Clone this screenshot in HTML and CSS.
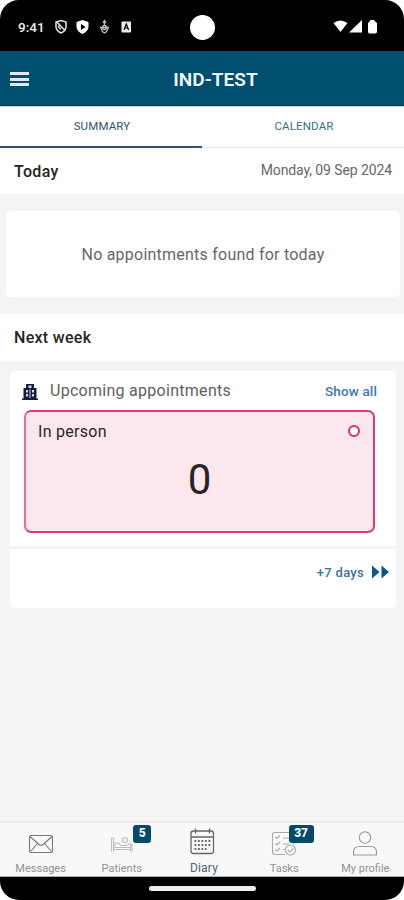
FILE: index.html
```
<!DOCTYPE html>
<html lang="en">
<head>
<meta charset="utf-8">
<title>IND-TEST</title>
<link rel="stylesheet" href="styles.css">
</head>
<body>
<div class="phone">
  <div class="status">
    <span class="clock">9:41</span>
    <svg class="status-left" width="78" height="16" viewBox="0 0 78 16">
      <g fill="none" stroke="#ddd" stroke-width="1.600"><path d="M7 1.500 12 3v5q-.5 4-5 6-4.500-2-5-6V3zM3 3l8.500 9M4.500 6.500q0 2.500 2.500 3.500"/></g>
      <path d="M28.500 1l6 2v5q-.5 4.500-6 7-5.500-2.500-6-7V3z" fill="#fff"/><path d="M27 5v6l4.500-3z" fill="#000"/>
      <g fill="none" stroke="#bbb" stroke-width="1.300"><path d="M50.500 1.500v5M49 4l1.500-2.500L52 4M46.500 8.500h8l-2 4-2 1.500-2-1.500z"/><circle cx="50.500" cy="8.500" r="2"/></g>
      <rect x="67.500" y="2.500" width="9.500" height="11" rx=".8" fill="#eee"/><path d="M70 11l2.300-6 2.300 6M70.800 9h3" fill="none" stroke="#000" stroke-width="1.200"/>
    </svg>
    <span class="camera"></span>
    <svg class="status-right" width="46" height="16" viewBox="0 0 46 16" fill="#fff">
      <path d="M.500 4Q7.500-1 14.500 4L7.500 13z"/><path d="M29 1v12.500H16z"/><path d="M37.500 1h3.500l1 1.500 2 1.500v8.500q0 2-1.500 2h-6Q35 14.500 35 12.500V4l1.500-1.500z"/>
    </svg>
  </div>
  <header class="header">
    <span class="menu"><i></i><i></i><i></i></span>
    <h1>IND-TEST</h1>
  </header>
  <nav class="tabs"><span class="tab active">SUMMARY</span><span class="tab">CALENDAR</span></nav>
  <section class="row today"><h2>Today</h2><span class="date">Monday, 09 Sep 2024</span></section>
  <div class="empty"><span>No appointments found for today</span></div>
  <section class="row next"><h2>Next week</h2></section>
  <section class="card">
    <div class="card-head">
      <svg class="building" width="16" height="18" viewBox="0 0 16 18"><path d="M4 5V1h8v4h2.500v10.500H16V17H0v-1.500h1.500V5z" fill="#171c3c"/><path d="M6.500 2.500h3V5h-3zM4 7h2v2.500H4zM10 7h2v2.500h-2zM4 11h2v2.500H4zM10 11h2v2.500h-2zM7.500 6.500h1v8.500h-1z" fill="#d5d9e5"/></svg>
      <span class="upcoming">Upcoming appointments</span><span class="show">Show all</span>
    </div>
    <div class="person"><div class="person-top"><span>In person</span><i class="ring"></i></div><div class="count">0</div></div>
    <div class="more"><span>+7 days</span><svg width="17" height="14" viewBox="0 0 17 14" fill="#095591"><path d="M0 .500 7.500 7 0 13.500zM9.500.500 17 7l-7.500 6.500z"/></svg></div>
  </section>
  <nav class="bottom">
    <div class="item"><svg width="30" height="28" viewBox="0 0 30 28" fill="none" stroke="#777" stroke-width="1.100"><rect x="3.500" y="6.500" width="23" height="17" rx="1.500"/><path d="M4 7.500l9 8q2 1.500 4 0l9-8M4.500 22.500l7-8M25.500 22.500l-7-8"/></svg><span>Messages</span></div>
    <div class="item"><svg width="30" height="28" viewBox="0 0 30 28" fill="none" stroke="#bdbdbd" stroke-width="1.100"><path d="M4.500 9v13.500M6.500 9v13.500M4.500 9h2M6.500 18.500h17M6.500 20.500h17M23.500 14.500v8M25 14.500v8M8 14h3l3 2.500h5l5-2M8 14v3"/><circle cx="18" cy="11" r="2.500"/></svg><b class="badge">5</b><span>Patients</span></div>
    <div class="item current"><svg width="30" height="28" viewBox="0 0 30 28" fill="none" stroke="#666" stroke-width="1.300"><rect x="3" y="3" width="22.500" height="22.500" rx="2.500"/><path d="M3 9h22.500M7.500.500v5M21.500.500v5"/><path d="M6.500 13h16M6.500 17h16M6.500 21h12" stroke-width="1.800" stroke-dasharray="1.800 1.700"/></svg><span>Diary</span></div>
    <div class="item"><svg width="30" height="28" viewBox="0 0 30 28" fill="none" stroke="#aaa" stroke-width="1.100"><path d="M16 25.500H6q-2.500 0-2.500-2.500V6Q3.500 3.500 6 3.500h16q2.500 0 2.500 2.500v9.500M6.500 8 8 9.500l3-3M14 9h7M6.500 14.500 8 16l3-3M14 15h6M6.500 20.500 8 22l3-3M14 20.500h2"/><circle cx="21.500" cy="21" r="5"/><path d="M19 21l2 2 3.500-4"/></svg><b class="badge wide">37</b><span>Tasks</span></div>
    <div class="item"><svg width="30" height="28" viewBox="0 0 30 28" fill="none" stroke="#999" stroke-width="1.100"><circle cx="15" cy="8.500" r="5.700"/><path d="M3.500 26v-3q0-5.500 6-5.500h11q6 0 6 5.500v3z"/></svg><span>My profile</span></div>
  </nav>
  <div class="gesture"><i></i></div>
</div>
</body>
</html>
```
FILE: styles.css
```
* { box-sizing: border-box; }
body { margin: 0; background: #fff; font-family: Roboto, sans-serif; }
h1, h2 { margin: 0; font-weight: 500; }
svg { display: block; flex: none; }
.phone { width: 404px; height: 900px; display: flex; flex-direction: column; background: #f4f4f4; border-radius: 19px; overflow: hidden; }
.status { height: 51px; flex: none; background: #000; color: #eee; display: flex; align-items: center; padding: 3px 25px 0 18px; }
.clock { font-size: 13.5px; width: 36px; font-weight: 500; }
.camera { width: 25px; height: 25px; border-radius: 50%; background: #fff; margin-left: 58px; }
.status-right { margin-left: auto; }
.header { height: 55px; flex: none; background: #004f70; color: #f4faff; display: grid; grid-template-columns: 30px 1fr; align-items: center; padding: 2px 0 0 10px; border-bottom: 1px solid #003a5e; }
.header h1 { font-size: 19px; font-weight: 600; letter-spacing: .1px; text-align: center; padding-right: 13px; white-space: nowrap; }
.menu { display: grid; gap: 2.5px; }
.menu i { width: 19px; height: 3px; background: #dfeaff; }
.tabs { height: 42px; flex: none; background: #fff; display: flex; border-top: 1px solid #c9d0d6; }
.tab { flex: 1; text-align: center; font-size: 11.5px; letter-spacing: .15px; line-height: 39px; color: #397087; border-bottom: 1px solid #e4e7eb; padding-left: 2px; }
.tab.active { color: #2b5674; border-bottom: 2px solid #365478; }
.row { flex: none; background: #fff; display: flex; align-items: center; justify-content: space-between; padding: 0 12px 0 14px; }
.row h2 { font-size: 16px; letter-spacing: .3px; color: #252525; }
.today { height: 46px; }
.date { font-size: 14px; letter-spacing: -.1px; color: #686868; padding-bottom: 2px; }
.empty { flex: none; height: 86px; margin: 17px 4px 17px 6px; border-radius: 5px; background: #fff; display: flex; align-items: center; justify-content: center; color: #666; font-size: 16px; letter-spacing: .23px; }
.next { height: 47px; }
.card { flex: none; height: 237px; margin: 10px 8px 0 10px; background: #fff; border-radius: 5px; overflow: hidden; }
.card-head { height: 39px; display: flex; align-items: center; padding: 0 19px 0 12px; }
.building { margin-top: 2px; }
.upcoming { margin-left: 12px; font-size: 16px; letter-spacing: .28px; color: #606060; }
.show { margin-left: auto; font-size: 13.5px; letter-spacing: .15px; color: #3d76b0; font-weight: 500; }
.person { margin: 0 21px 0 14px; height: 123px; border: 2px solid #d93a78; border-left-color: #e66a9c; border-radius: 7px; background: #fce7ee; }
.person-top { height: 39px; display: flex; justify-content: space-between; align-items: center; padding: 0 13px 0 12px; font-size: 16px; letter-spacing: .28px; color: #302229; }
.ring { width: 12px; height: 12px; margin-bottom: 1px; border: 2px solid #de2b70; border-radius: 50%; background: #fff; }
.count { font-size: 42px; line-height: 58px; text-align: center; color: #252525; }
.more { margin-top: 13px; border-top: 3px solid #f4f4f4; height: 62px; display: flex; align-items: flex-start; justify-content: flex-end; gap: 8px; padding: 16px 7px 0 0; color: #3b72a1; font-size: 13px; font-weight: 500; letter-spacing: .3px; line-height: 16px; }
.bottom { flex: none; margin-top: auto; height: 56px; border-top: 2px solid #e9e9e9; border-bottom: 1px solid #aaa; background: #f8f8f8; display: grid; grid-template-columns: repeat(5, 81.2px); }
.item { position: relative; display: flex; flex-direction: column; align-items: center; padding-top: 6px; font-size: 11px; line-height: 17px; color: #929292; }
.item > span { margin-top: 3px; }
.item.current { color: #506373; font-size: 12px; }
.item.current > span { padding-left: 2px; letter-spacing: .2px; }
.item.current > svg { margin-top: -1px; margin-bottom: 1px; }
.badge { position: absolute; top: 2px; left: 52px; width: 18px; height: 18px; border-radius: 3px; background: #074968; color: #fff; font-size: 12px; font-weight: 800; line-height: 17px; text-align: center; }
.badge.wide { left: 45px; width: 25px; }
.gesture { height: 23px; flex: none; background: #000; display: flex; justify-content: center; align-items: center; }
.gesture i { width: 107px; height: 5px; margin-top: -1px; border-radius: 3px; background: #eee; }
```
